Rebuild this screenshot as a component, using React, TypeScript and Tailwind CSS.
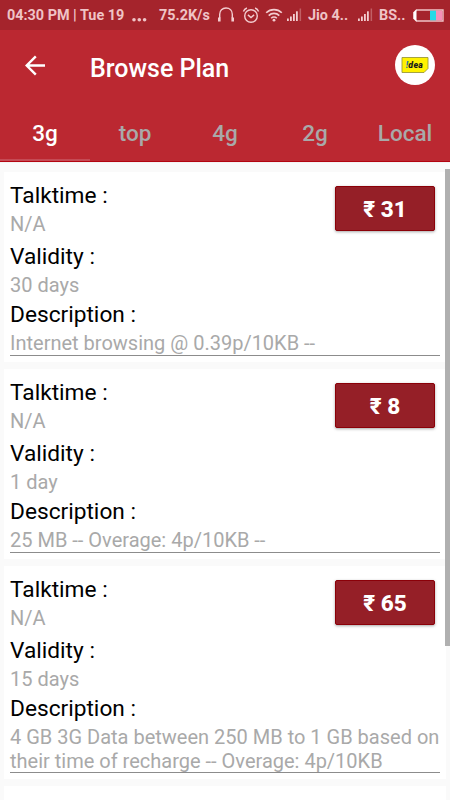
import { clsx } from "clsx";

type Plan = {
  talktime: string;
  validity: string;
  description: string;
  price: number;
};

const tabs = ["3g", "top", "4g", "2g", "Local"];

const plans: Plan[] = [
  { talktime: "N/A", validity: "30 days", description: "Internet browsing @ 0.39p/10KB --", price: 31 },
  { talktime: "N/A", validity: "1 day", description: "25 MB -- Overage: 4p/10KB --", price: 8 },
  {
    talktime: "N/A",
    validity: "15 days",
    description: "4 GB 3G Data between 250 MB to 1 GB based on their time of recharge -- Overage: 4p/10KB",
    price: 65,
  },
];

function Signal() {
  return (
    <svg width="15" height="14" viewBox="0 0 15 14" className="mb-px shrink-0" fill="#f3cdd0">
      <rect x="0" y="10.5" width="1.8" height="2.5" />
      <rect x="3" y="8.5" width="1.8" height="4.5" />
      <rect x="6" y="6" width="1.8" height="7" />
      <rect x="9" y="3.3" width="1.8" height="9.7" />
      <rect x="12.6" y="0.5" width="1.5" height="12.5" opacity="0.35" />
    </svg>
  );
}

function StatusBar() {
  return (
    <div className="flex h-[30px] items-center bg-[#a5242c] pt-px pl-[7px] text-[14.4px] leading-none font-bold whitespace-nowrap text-[#efc3c6]">
      <span className="w-[124px] pt-px">04:30 PM | Tue 19</span>
      <svg width="16" height="14" viewBox="0 0 16 14" className="shrink-0" fill="#efc3c6">
        <circle cx="3" cy="10.7" r="1.8" />
        <circle cx="8.3" cy="10.7" r="1.8" />
        <circle cx="13.6" cy="10.7" r="1.8" />
      </svg>
      <span className="ml-[12px] w-[58px] pt-px">75.2K/s</span>
      {/* headphones */}
      <svg width="18" height="18" viewBox="0 0 18 18" className="mb-px shrink-0" fill="none" stroke="#f3cdd0">
        <path d="M2.7 12V8.2C2.7 4.5 5.3 2 9 2s6.3 2.5 6.3 6.2V12" strokeWidth="1.4" />
        <path d="M2.3 11.5v4M15.7 11.5v4" strokeWidth="2.6" />
      </svg>
      {/* alarm */}
      <svg width="18" height="18" viewBox="0 0 18 18" className="mb-[2px] ml-[7px] shrink-0" fill="none" stroke="#f3cdd0" strokeWidth="1.4">
        <circle cx="9" cy="10" r="6.3" />
        <path d="M1.4 5.4C2 3.8 3.2 2.6 4.9 2M16.6 5.4C16 3.8 14.8 2.6 13.1 2M5.9 8.9 9 11.5l3.1-2.6" />
      </svg>
      {/* wifi */}
      <svg width="18" height="16" viewBox="0 0 18 16" className="mb-px ml-[5px] shrink-0" fill="none" stroke="#f3cdd0" strokeWidth="1.6">
        <path d="M1.2 5.8C5.6 1.5 12.4 1.5 16.8 5.8" />
        <path d="M3.7 8.6c3-3 7.6-3 10.6 0" />
        <path d="M6.2 11.2c1.6-1.6 4-1.6 5.6 0" />
        <circle cx="9" cy="13.2" r="1.4" fill="#f3cdd0" stroke="none" />
      </svg>
      <div className="ml-[4px] flex">
        <Signal />
      </div>
      <span className="ml-[6px] w-[50px] pt-px">Jio 4..</span>
      <Signal />
      <span className="ml-[6px] w-[34px] pt-px">BS..</span>
      {/* battery */}
      <svg width="31" height="13" viewBox="0 0 31 13" className="mb-px shrink-0">
        <path d="M3.5 1H30v11H3.5L1 9.5v-6z" fill="#a5242c" stroke="#efc3c6" strokeWidth="1.4" />
        <path d="M3.5.5 0.5 3.5v6l3 3z" fill="#fff" />
        <rect x="17" y="1.7" width="6" height="9.6" fill="#26d9e6" />
        <rect x="23" y="1.7" width="6.3" height="9.6" fill="#f590b8" />
      </svg>
    </div>
  );
}

function OperatorLogo() {
  return (
    <div className="flex size-10 items-center justify-center rounded-full bg-white">
      <svg width="28" height="18" viewBox="0 0 28 18">
        <path d="M1 1.5h26v11l-4 4H1z" fill="#fff200" stroke="#9c9a3a" strokeWidth="0.9" />
        <text
          x="4.8"
          y="11.8"
          textLength="17"
          fontFamily="Roboto, sans-serif"
          fontSize="8.8"
          fontWeight="900"
          fontStyle="italic"
          fill="#1a1a1a"
        >
          <tspan fill="#2672a8">!</tspan>dea
        </text>
      </svg>
    </div>
  );
}

function Field({ label, value }: { label: string; value: string }) {
  return (
    <>
      <p className="text-[22.7px] leading-[27px] text-black">{label}</p>
      <p className="mt-[3px] -mr-1 -mb-[0.8px] pt-[1.2px] text-[20px] leading-[23.5px] text-[#a9a9a9]">{value}</p>
    </>
  );
}

function PlanCard({ plan }: { plan: Plan }) {
  return (
    <div className="flex flex-col bg-white px-[6px] pt-[10px] pb-[6.1px]">
      <div className="flex justify-between">
        <div className="flex flex-col">
          <Field label="Talktime :" value={plan.talktime} />
          <div className="h-[7.1px]" />
          <Field label="Validity :" value={plan.validity} />
        </div>
        <button className="mt-[4px] mr-[5px] flex h-[45px] w-[100px] items-center justify-center rounded-[2px] border border-[#8b0008] bg-[#951f27] pt-[3px] text-[22.5px] font-extrabold text-white shadow-[0_1px_3px_rgba(0,0,0,0.35)]">
          ₹ {plan.price}
        </button>
      </div>
      <div className="mt-[4.1px] flex flex-col border-b border-[#8c8c8c]">
        <Field label="Description :" value={plan.description} />
      </div>
    </div>
  );
}

export default function App() {
  return (
    <div className="flex h-[800px] w-[450px] flex-col overflow-hidden bg-[#fafafa] font-['Roboto',sans-serif]">
      <StatusBar />

      {/* App bar */}
      <header className="flex h-[132px] shrink-0 flex-col border-b border-[#b30410] bg-[#bb2831]">
        <div className="flex h-[70px] items-center pr-[15px] pl-[25px]">
          <svg width="21" height="21" viewBox="0 0 21 21" fill="none" stroke="#fff" strokeWidth="2.4">
            <path d="M20 10.5H2M10.8 1.4 1.7 10.5l9.1 9.1" />
          </svg>
          <h1 className="mt-[7px] ml-[44px] flex-1 text-[25px] font-medium text-white">Browse Plan</h1>
          <OperatorLogo />
        </div>
        <nav className="grid flex-1 grid-cols-5">
          {tabs.map((tab, i) => (
            <button
              key={tab}
              className={clsx(
                "border-b-2 pt-[8px] text-[22.5px] font-medium",
                i === 0 ? "border-[#c54b55] text-white" : "border-transparent text-[#a9a9a9]"
              )}
            >
              {tab}
            </button>
          ))}
        </nav>
      </header>

      {/* Plans */}
      <main className="flex min-h-0 flex-1 border-t border-[#f3f3f3]">
        <div className="ml-1 flex w-[442px] shrink-0 flex-col gap-[7px] pt-[9px]">
          {plans.map((plan) => (
            <PlanCard key={plan.price} plan={plan} />
          ))}
          <div className="h-[60px] shrink-0 bg-white" />
        </div>
        <div className="z-10 mt-[6px] -ml-px h-[477px] w-[5px] bg-[#b0b0b0]" />
      </main>
    </div>
  );
}
